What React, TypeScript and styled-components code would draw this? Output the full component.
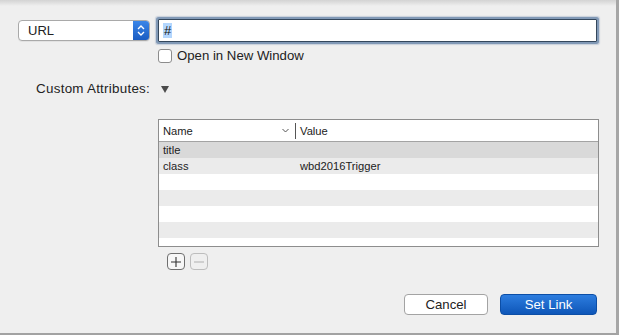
import React from "react";
import styled, { createGlobalStyle } from "styled-components";

const GlobalStyle = createGlobalStyle`
  body {
    margin: 0;
    font-family: "Liberation Sans", Arial, sans-serif;
    color: #222;
  }
`

const Page = styled.div`
  width: 619px;
  height: 335px;
  box-sizing: border-box;
  padding-top: 19px;
  background: linear-gradient(#d3d3d3 0, #efefef 6px);
  border-right: 3px solid #a6a6a6;
  border-bottom: 2px solid #a2a2a2;
  display: flex;
  flex-direction: column;
`

const Row = styled.div<{ $mt?: number }>`
  display: flex;
  align-items: center;
  margin-top: ${(p) => p.$mt ?? 0}px;
`

const LabelCell = styled.div`
  width: 150px;
  flex: none;
  display: flex;
  justify-content: flex-end;
  font-size: 13.4px;
  letter-spacing: 0.25px;
  line-height: 16px;
`

const Content = styled.div<{ $pl?: number; $end?: boolean }>`
  width: 441px;
  margin-left: 8px;
  display: flex;
  align-items: center;
  gap: ${(p) => (p.$end ? 12 : 5)}px;
  padding-left: ${(p) => p.$pl ?? 0}px;
  justify-content: ${(p) => (p.$end ? "flex-end" : "flex-start")};
  padding-right: ${(p) => (p.$end ? 2 : 0)}px;
  box-sizing: border-box;
`

const Select = styled.div`
  width: 132px;
  height: 21px;
  box-sizing: border-box;
  border: 1px solid #a9a9a9;
  border-radius: 4px;
  background: #fff;
  display: flex;
  align-items: stretch;
  overflow: hidden;
  box-shadow: 0 1px 0 rgba(0, 0, 0, 0.05);
  letter-spacing: 0;
`

const SelectText = styled.div`
  flex: 1;
  padding-left: 9px;
  font-size: 13px;
  line-height: 19px;
`

const Stepper = styled.div`
  width: 16px;
  background: linear-gradient(#3b86e8, #1a5cc2);
  display: flex;
  align-items: center;
  justify-content: center;
`

const Field = styled.div`
  width: 439px;
  height: 23px;
  box-sizing: border-box;
  background: #fff;
  border: 1px solid #34475c;
  box-shadow: 0 0 0 2px #8199b6, 0 0 1px 3px rgba(129, 153, 182, 0.35);
  border-radius: 1px;
  padding-left: 4px;
  font-size: 13px;
  line-height: 21px;
`

const Selected = styled.span`
  background: #b3d6fd;
  padding: 0 1px;
  color: #111;
`

const Check = styled.div`
  width: 14px;
  height: 14px;
  box-sizing: border-box;
  border: 1px solid #8c8c8c;
  border-radius: 3px;
  background: #fff;
`

const CheckLabel = styled.span`
  font-size: 13.2px;
  line-height: 14px;
`

const Table = styled.div`
  width: 441px;
  box-sizing: border-box;
  border: 1px solid #8d8d8d;
  background: #fff;
  font-size: 11px;
`

const Header = styled.div`
  display: flex;
  height: 22px;
  box-sizing: border-box;
  border-bottom: 1px solid #a3a3a3;
  align-items: center;
`

const HeadCell = styled.div<{ $first?: boolean }>`
  width: ${(p) => (p.$first ? "137px" : "auto")};
  flex: ${(p) => (p.$first ? "none" : 1)};
  height: 16px;
  box-sizing: border-box;
  padding-left: 4px;
  padding-right: 6px;
  display: flex;
  align-items: center;
  justify-content: space-between;
  border-right: ${(p) => (p.$first ? "1px solid #555" : "none")};
  font-size: 11.2px;
`

const Body = styled.div`
  height: 104px;
  overflow: hidden;
`

const TRow = styled.div<{ $bg: string }>`
  display: flex;
  height: 16px;
  line-height: 16px;
  background: ${(p) => p.$bg};
`

const Cell = styled.div<{ $first?: boolean }>`
  width: ${(p) => (p.$first ? "137px" : "auto")};
  flex: ${(p) => (p.$first ? "none" : 1)};
  padding-left: 4px;
  box-sizing: border-box;
  font-size: 11.2px;
`

const SmallButton = styled.div<{ $disabled?: boolean }>`
  width: 18px;
  height: 17px;
  box-sizing: border-box;
  border: 1px solid ${(p) => (p.$disabled ? "#bdbdbd" : "#6f6f6f")};
  border-radius: 4px;
  background: ${(p) => (p.$disabled ? "#efefef" : "#f7f7f7")};
  display: flex;
  align-items: center;
  justify-content: center;
`

const Button = styled.div<{ $primary?: boolean }>`
  height: 21px;
  box-sizing: border-box;
  border-radius: 4px;
  display: flex;
  align-items: center;
  justify-content: center;
  font-size: 13.2px;
  width: ${(p) => (p.$primary ? 97 : 84)}px;
  color: ${(p) => (p.$primary ? "#fff" : "#222")};
  background: ${(p) =>
    p.$primary ? "linear-gradient(#2d7ddf, #0e56b8)" : "#fff"};
  border: 1px solid ${(p) => (p.$primary ? "#0c4ea6" : "#a3a3a3")};
`

const rows = [
  { name: "title", value: "", bg: "#d9d9d9" },
  { name: "class", value: "wbd2016Trigger", bg: "#ebebeb" },
  { name: "", value: "", bg: "#fff" },
  { name: "", value: "", bg: "#ebebeb" },
  { name: "", value: "", bg: "#fff" },
  { name: "", value: "", bg: "#ebebeb" },
  { name: "", value: "", bg: "#fff" },
]

export default function App() {
  return (
    <Page>
      <GlobalStyle />
      <Row>
        <LabelCell>
          <Select>
            <SelectText>URL</SelectText>
            <Stepper>
              <svg width="16" height="19" viewBox="0 0 16 19">
                <path d="M5 8 L8 5 L11 8 M5 11 L8 14 L11 11" stroke="#fff" strokeWidth="1.4" fill="none" />
              </svg>
            </Stepper>
          </Select>
        </LabelCell>
        <Content>
          <Field>
            <Selected>#</Selected>
          </Field>
        </Content>
      </Row>
      <Row $mt={7}>
        <LabelCell />
        <Content>
          <Check />
          <CheckLabel>Open in New Window</CheckLabel>
        </Content>
      </Row>
      <Row $mt={18}>
        <LabelCell>Custom Attributes:</LabelCell>
        <Content $pl={3}>
          <svg width="8" height="7" viewBox="0 0 8 7">
            <polygon points="0,0 8,0 4,7" fill="#4b4b4b" />
          </svg>
        </Content>
      </Row>
      <Row $mt={22}>
        <LabelCell />
        <Content>
          <Table>
            <Header>
              <HeadCell $first>
                Name
                <svg width="7" height="5" viewBox="0 0 7 5">
                  <path d="M0.5 1 L3.5 4 L6.5 1" stroke="#555" strokeWidth="1" fill="none" />
                </svg>
              </HeadCell>
              <HeadCell>Value</HeadCell>
            </Header>
            <Body>
              {rows.map((r, i) => (
                <TRow key={i} $bg={r.bg}>
                  <Cell $first>{r.name}</Cell>
                  <Cell>{r.value}</Cell>
                </TRow>
              ))}
            </Body>
          </Table>
        </Content>
      </Row>
      <Row $mt={6}>
        <LabelCell />
        <Content $pl={9}>
          <SmallButton>
            <svg width="12" height="12" viewBox="0 0 12 12">
              <path d="M6 1 V11 M1 6 H11" stroke="#333" strokeWidth="1.1" />
            </svg>
          </SmallButton>
          <SmallButton $disabled>
            <svg width="12" height="12" viewBox="0 0 12 12">
              <path d="M1 6 H11" stroke="#b5b5b5" strokeWidth="1.1" />
            </svg>
          </SmallButton>
        </Content>
      </Row>
      <Row $mt={24}>
        <LabelCell />
        <Content $end>
          <Button>Cancel</Button>
          <Button $primary>Set Link</Button>
        </Content>
      </Row>
    </Page>
  );
}
